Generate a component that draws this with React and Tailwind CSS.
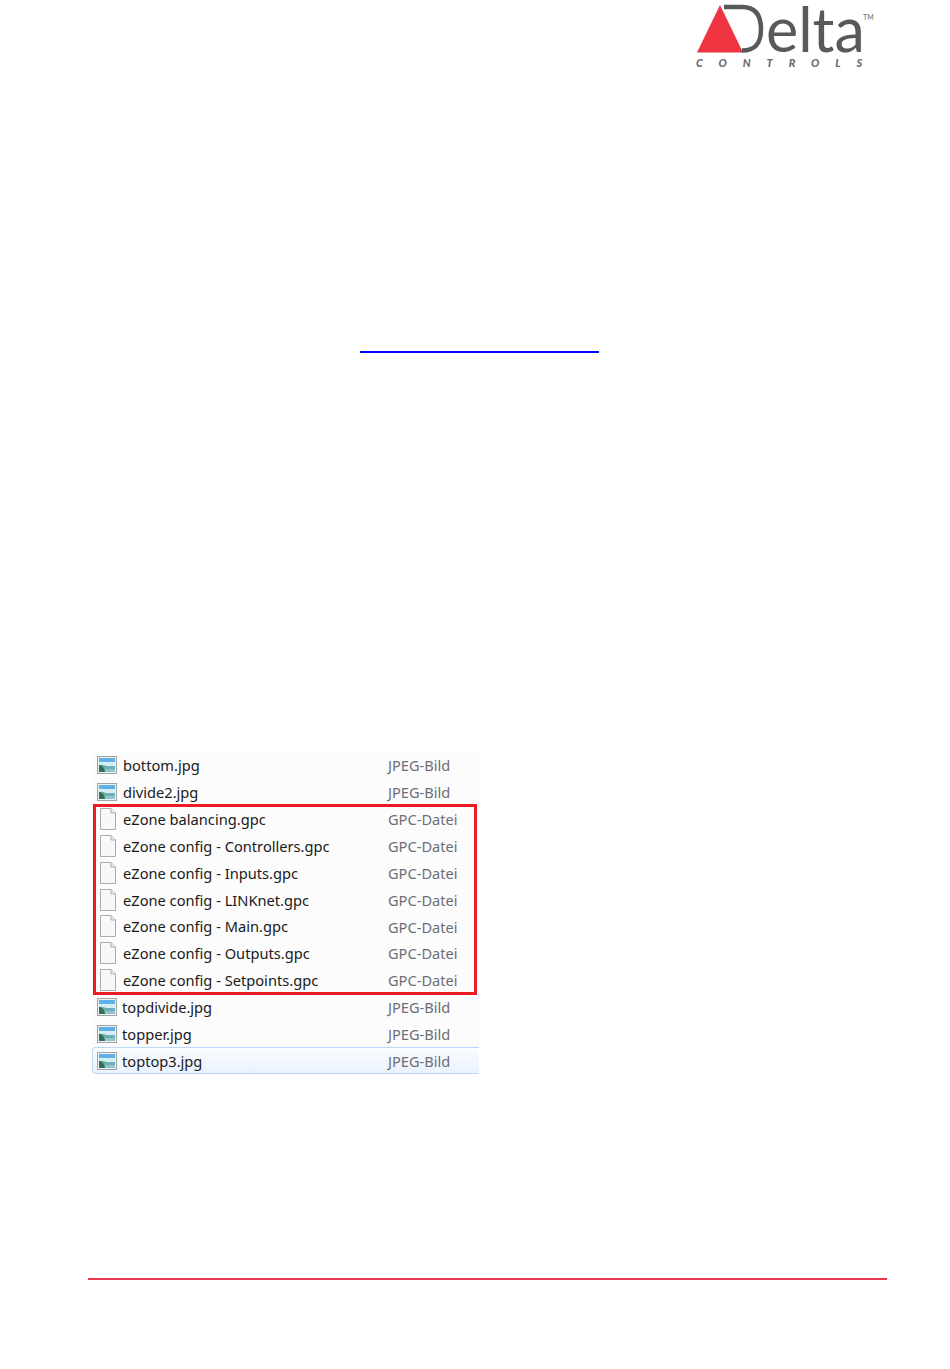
const rowFont = { fontFamily: '"Noto Sans", sans-serif' };

function DeltaLogo() {
  return (
    <svg width="180" height="70" viewBox="0 0 180 70" className="block overflow-visible">
      <polygon points="26,5 3,52.5 49,52.5" fill="#ef3340" />
      <path d="M30 7 H48 C62 7 67 16 67 29 C67 43 62 50.5 48 50.5 H51" fill="none" stroke="#58595b" strokeWidth="4.5" />
      <text x="72" y="52" fontFamily="Lato, sans-serif" fontSize="61" fontWeight="400" fill="#58595b">elta</text>
      <text x="169" y="20" fontFamily="Lato, sans-serif" fontSize="7" fill="#6d6e71">TM</text>
      <text x="2" y="67" fontFamily="Lato, sans-serif" fontSize="11" fontStyle="italic" fontWeight="900" fill="#6d6e71" letterSpacing="15.9">CONTROLS</text>
    </svg>
  );
}

function ImageIcon() {
  return (
    <svg width="20" height="18" viewBox="0 0 20 18" className="shrink-0 block">
      <rect x="0.5" y="0.5" width="19" height="17" fill="#f0f0f0" stroke="#a3a3a3" />
      <rect x="2" y="2" width="16" height="14" fill="#5fb0e6" />
      <path d="M2 6 H18 V10 H2 Z" fill="#d5eef6" />
      <path d="M2 9 C6 8 9 10 11 11 H18 V16 H2 Z" fill="#6fb0a0" />
      <path d="M2 9 C5 9 7 11 8 16 H2 Z" fill="#2f6f5c" />
      <path d="M8 13 H18 V16 H8 Z" fill="#8fc4d8" />
    </svg>
  );
}

function FileIcon() {
  return (
    <svg width="16" height="22" viewBox="0 0 16 22" className="shrink-0 block ml-[2px]">
      <path d="M0.5 0.5 H11 L15.5 5 V21.5 H0.5 Z" fill="#f8f8f8" stroke="#ababab" />
      <path d="M11 0.5 V5 H15.5" fill="#ebebeb" stroke="#ababab" />
    </svg>
  );
}

function FileRow({ name, type, image, textX = "pl-[6px]", selected }) {
  return (
    <div
      className={`flex items-center h-[26.85px] text-[14.65px] ${
        selected
          ? "pl-[4px] border-y border-l border-[#b9d7fb] rounded-l-sm bg-gradient-to-b from-[#fafcff] to-[#eaf3fe]"
          : "pl-[5px]"
      }`}
      style={rowFont}
    >
      <div className="w-[20px] flex justify-center">{image ? <ImageIcon /> : <FileIcon />}</div>
      <span className={`${textX} pt-[2px] w-[271px] text-[#1a1a1a] whitespace-nowrap`}>{name}</span>
      <span className="pt-[2px] text-[14.6px] text-[#6d6d78] whitespace-nowrap">{type}</span>
    </div>
  );
}

const gpcFiles = [
  "eZone balancing.gpc",
  "eZone config - Controllers.gpc",
  "eZone config - Inputs.gpc",
  "eZone config - LINKnet.gpc",
  "eZone config - Main.gpc",
  "eZone config - Outputs.gpc",
  "eZone config - Setpoints.gpc",
];

export default function App() {
  return (
    <div className="w-[950px] h-[1369px] bg-white overflow-hidden flex flex-col">
      <div className="flex justify-end pr-[76px]">
        <DeltaLogo />
      </div>

      {/* blue link underline, the text is not visible */}
      <div className="ml-[360px] mt-[281px] w-[239px] h-[2px] bg-[#0000ff]" />

      {/* file list */}
      <div className="ml-[92px] mt-[399px] w-[387px] bg-[#fcfcfc]">
        <FileRow image name="bottom.jpg" type="JPEG-Bild" />
        <FileRow image name="divide2.jpg" type="JPEG-Bild" />
        <div className="relative">
          {gpcFiles.map((f) => (
            <FileRow key={f} name={f} type="GPC-Datei" />
          ))}
          <div className="absolute -top-[2px] bottom-[-1px] left-px right-[2px] border-[3px] border-[#ed1c24]" />
        </div>
        <FileRow image name="topdivide.jpg" type="JPEG-Bild" textX="pl-[5px] pr-px" />
        <FileRow image name="topper.jpg" type="JPEG-Bild" textX="pl-[5px] pr-px" />
        <FileRow image selected name="toptop3.jpg" type="JPEG-Bild" textX="pl-[5px] pr-px" />
      </div>

      {/* footer rule */}
      <div className="ml-[88px] mt-[204px] w-[799px] h-[2px] bg-[#e8384f]" />
    </div>
  );
}
